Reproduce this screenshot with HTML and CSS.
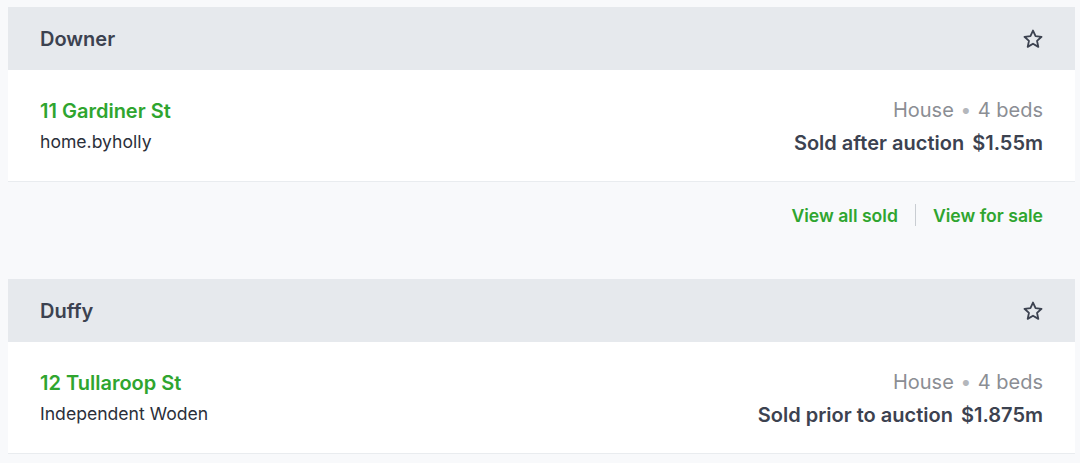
FILE: index.html
```html
<!DOCTYPE html>
<html lang="en">
<head>
  <meta charset="UTF-8" />
  <meta name="viewport" content="width=device-width, initial-scale=1.0" />
  <title>Recent sales</title>

  <link rel="stylesheet" href="styles.css">
</head>
<body>

  <div class="container">

    <!-- Downer -->
    <div class="suburb">
      <div class="suburb-header">
        <h2>Downer</h2>
        <button class="star-button" aria-label="Save suburb">
          <svg width="22" height="22" viewBox="0 0 24 24" fill="none" stroke="currentColor" stroke-width="2" stroke-linejoin="round">
            <polygon points="12 2.8 14.8 8.9 21.3 9.6 16.4 14 17.8 20.6 12 17.2 6.2 20.6 7.6 14 2.7 9.6 9.2 8.9" />
          </svg>
        </button>
      </div>
      <div class="sale-item">
        <div class="sale-left">
          <a class="address" href="#">11 Gardiner St</a>
          <p class="agency">home.byholly</p>
        </div>
        <div class="sale-right">
          <p class="property">House <span class="dot">&bull;</span> 4 beds</p>
          <p class="result">Sold after auction <span class="price">$1.55m</span></p>
        </div>
      </div>
      <div class="suburb-links">
        <a href="#">View all sold</a>
        <span class="divider"></span>
        <a href="#">View for sale</a>
      </div>
    </div>

    <!-- Duffy -->
    <div class="suburb">
      <div class="suburb-header">
        <h2>Duffy</h2>
        <button class="star-button" aria-label="Save suburb">
          <svg width="22" height="22" viewBox="0 0 24 24" fill="none" stroke="currentColor" stroke-width="2" stroke-linejoin="round">
            <polygon points="12 2.8 14.8 8.9 21.3 9.6 16.4 14 17.8 20.6 12 17.2 6.2 20.6 7.6 14 2.7 9.6 9.2 8.9" />
          </svg>
        </button>
      </div>
      <div class="sale-item">
        <div class="sale-left">
          <a class="address" href="#">12 Tullaroop St</a>
          <p class="agency">Independent Woden</p>
        </div>
        <div class="sale-right">
          <p class="property">House <span class="dot">&bull;</span> 4 beds</p>
          <p class="result">Sold prior to auction <span class="price">$1.875m</span></p>
        </div>
      </div>
    </div>

  </div>

</body>
</html>
```

FILE: styles.css
```css
body {
  font-family: Inter, "Noto Sans", Arial, sans-serif;
  background-color: #f8f9fb;
  margin: 0;
  padding: 0;
  color: #3c4250;
}

.container {
  padding: 7px 5px 0 8px;
}

.suburb {
  margin-bottom: 31px;
}

.suburb-header {
  display: flex;
  justify-content: space-between;
  align-items: center;
  height: 63px;
  padding: 0 32px;
  background-color: #e6e9ed;
}

.suburb-header h2 {
  margin: 0;
  font-size: 20px;
  font-weight: 600;
  color: #3c4250;
}

.star-button {
  display: flex;
  padding: 0;
  margin-right: -1px;
  border: none;
  background: none;
  color: #3c4250;
  cursor: pointer;
}

.sale-item {
  display: flex;
  justify-content: space-between;
  align-items: center;
  height: 111px;
  padding: 0 32px;
  background-color: #fff;
  border-bottom: 1px solid #e9ecef;
}

.sale-left,
.sale-right {
  display: flex;
  flex-direction: column;
  gap: 6px;
}

.sale-right {
  align-items: flex-end;
  margin-top: 2px;
}

.address {
  font-size: 20px;
  font-weight: 600;
  color: #2fa52f;
  text-decoration: none;
  line-height: 26px;
}

.agency {
  margin: 0;
  font-size: 17.6px;
  color: #2b2f3a;
  line-height: 24px;
}

.property {
  margin: 0;
  font-size: 20px;
  color: #8b8e94;
  line-height: 26px;
}

.dot {
  color: #b4b7bc;
  font-size: 19px;
  margin: 0 1px;
}

.result {
  margin: 0;
  font-size: 20px;
  font-weight: 600;
  color: #3c4250;
  line-height: 26px;
}

.price {
  margin-left: 3px;
}

.suburb-links {
  display: flex;
  justify-content: flex-end;
  align-items: center;
  height: 66px;
  padding: 0 32px;
  gap: 17px;
}

.suburb-links a {
  font-size: 17.6px;
  font-weight: 600;
  color: #2fa52f;
  text-decoration: none;
}

.divider {
  width: 1px;
  height: 22px;
  background-color: #c9cdd2;
}
```
